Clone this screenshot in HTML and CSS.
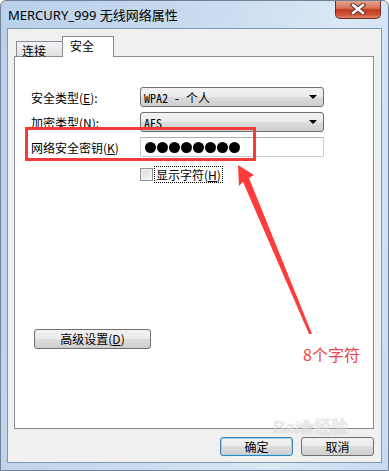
FILE: index.html
```html
<!DOCTYPE html>
<html lang="zh-CN">
<head>
  <meta charset="UTF-8">
  <meta name="viewport" content="width=device-width, initial-scale=1.0">
  <title>MERCURY_999 无线网络属性</title>
  <link rel="stylesheet" href="styles.css">
</head>
<body>
  <div class="window">
    <div class="titlebar">
      <span class="title">MERCURY_999 无线网络属性</span>
      <div class="close-btn">
        <svg width="16" height="12" viewBox="0 0 16 12">
          <path d="M3 2 L13 10 M13 2 L3 10" stroke="#5a3a36" stroke-width="4.5" stroke-linecap="square"/>
          <path d="M3 2 L13 10 M13 2 L3 10" stroke="#ffffff" stroke-width="2.4" stroke-linecap="square"/>
        </svg>
      </div>
    </div>

    <div class="client">
      <div class="tabs">
        <div class="tab">连接</div>
        <div class="tab active">安全</div>
      </div>

      <div class="panel">
        <div class="form">
          <label class="label">安全类型(<u>E</u>):</label>
          <div class="combo">
            <span>WPA2 - 个人</span>
            <span class="caret"></span>
          </div>

          <label class="label">加密类型(<u>N</u>):</label>
          <div class="combo">
            <span>AES</span>
            <span class="caret"></span>
          </div>

          <label class="label">网络安全密钥(<u>K</u>)</label>
          <div class="textbox">
            <span class="dot"></span><span class="dot"></span><span class="dot"></span><span class="dot"></span>
            <span class="dot"></span><span class="dot"></span><span class="dot"></span><span class="dot"></span>
          </div>

          <span></span>
          <div class="check-row">
            <span class="checkbox"></span>
            <span class="check-label">显示字符(<u>H</u>)</span>
          </div>
        </div>

        <button class="btn advanced">高级设置(<u>D</u>)</button>
      </div>

      <div class="footer">
        <button class="btn default">确定</button>
        <button class="btn">取消</button>
      </div>
    </div>

    <!-- annotations drawn over the dialog -->
    <div class="highlight-box"></div>
    <svg class="arrow" width="389" height="471" viewBox="0 0 389 471">
      <polygon points="238,165 254,175 249,178 312,334 309,334 243,182 239,186" fill="#ff3b3b"/>
    </svg>
    <div class="note">8个字符</div>
    <div class="watermark">Bai<span class="paw">&#10047;</span>经验</div>
  </div>
</body>
</html>
```

FILE: styles.css
```css
body {
  margin: 0;
  font-family: "Noto Sans CJK SC", sans-serif;
  font-size: 12px;
  color: #000;
  background: #fff;
}

.window {
  position: relative;
  width: 389px;
  height: 471px;
  box-sizing: border-box;
  display: flex;
  flex-direction: column;
  background: linear-gradient(100deg, #b9d1ea 0%, #c9dcf0 45%, #dbe8f5 75%, #c6dbf1 100%);
  border: 1px solid #6f8296;
  border-radius: 6px 6px 0 0;
  overflow: hidden;
}

.titlebar {
  height: 27px;
  display: flex;
  justify-content: space-between;
  align-items: flex-start;
  padding: 0 7px 0 7px;
}

.title {
  font-family: "Noto Sans", "Noto Sans CJK SC", sans-serif;
  font-size: 13px;
  line-height: 29px;
  color: #000;
}

.close-btn {
  width: 44px;
  height: 18px;
  margin-top: -1px;
  display: flex;
  align-items: center;
  justify-content: center;
  background: linear-gradient(#e9a898 0%, #d8735c 45%, #c3391f 55%, #d2583c 85%, #e08a6c 100%);
  border: 1px solid #6b2f27;
  border-top: none;
  border-radius: 0 0 5px 5px;
}

.client {
  flex: 1;
  margin: 0 6px 7px 6px;
  background: #f0f0f0;
  border: 1px solid #8497ab;
  padding: 7px 7px 0 6px;
  display: flex;
  flex-direction: column;
}

.tabs {
  display: flex;
  align-items: flex-end;
  height: 20px;
  padding-left: 2px;
  position: relative;
  z-index: 1;
}

.tab {
  height: 15px;
  width: 47px;
  border: 1px solid #898c95;
  border-bottom: none;
  background: linear-gradient(#f3f3f3, #e2e2e2);
  line-height: 17px;
  padding-left: 5px;
  box-sizing: border-box;
  font-size: 12px;
}

.tab.active {
  height: 21px;
  width: 52px;
  margin-bottom: -1px;
  margin-left: -1px;
  background: #fff;
  line-height: 18px;
  padding-left: 7px;
}

.panel {
  height: 373px;
  box-sizing: border-box;
  background: #fff;
  border: 1px solid #898c95;
  padding: 30px 0 0 16px;
}

.form {
  display: grid;
  grid-template-columns: 109px 184px;
  grid-auto-rows: 20px;
  row-gap: 5px;
  align-items: center;
}

.form .check-row {
  margin-top: 5px;
}

.label {
  font-size: 12px;
}

.combo {
  height: 20px;
  box-sizing: border-box;
  border: 1px solid #707070;
  border-radius: 3px;
  background: linear-gradient(#f3f3f3 0%, #ebebeb 50%, #dcdcdc 50%, #cfcfcf 100%);
  display: flex;
  align-items: center;
  justify-content: space-between;
  padding: 0 5px 0 3px;
  font-family: "Noto Sans Mono CJK SC", "Liberation Mono", "Noto Sans CJK SC", monospace;
  font-size: 12px;
}

.caret {
  width: 0;
  height: 0;
  border-left: 4px solid transparent;
  border-right: 4px solid transparent;
  border-top: 4px solid #000;
  margin-right: 1px;
}

.textbox {
  height: 20px;
  box-sizing: border-box;
  border: 1px solid #c5cbd3;
  border-top-color: #abadb3;
  border-radius: 2px;
  background: #fff;
  display: flex;
  align-items: center;
  gap: 1px;
  padding-left: 4px;
}

.dot {
  width: 11px;
  height: 11px;
  border-radius: 50%;
  background: #000;
}

.check-row {
  display: flex;
  align-items: center;
  gap: 2px;
}

.checkbox {
  width: 13px;
  height: 13px;
  box-sizing: border-box;
  border: 1px solid #8e8f8f;
  background: linear-gradient(135deg, #dcdcdc, #f6f6f6);
  box-shadow: inset 0 0 0 1px #f4f4f4;
}

.check-label {
  outline: 1px dotted #000;
  padding: 0 1px;
  line-height: 15px;
}

.btn {
  height: 19px;
  box-sizing: border-box;
  border: 1px solid #707070;
  border-radius: 3px;
  background: linear-gradient(#f2f2f2 0%, #ebebeb 50%, #dddddd 50%, #cfcfcf 100%);
  font-family: "Noto Sans CJK SC", sans-serif;
  font-size: 12px;
  padding: 0;
  line-height: 16px;
  color: #000;
}

.advanced {
  width: 117px;
  margin: 147px 0 0 3px;
  height: 20px;
}

.footer {
  display: flex;
  justify-content: flex-end;
  gap: 8px;
  margin-top: 8px;
}

.footer .btn {
  width: 73px;
}

.btn.default {
  border-color: #3c7fb1;
  box-shadow: inset 0 0 0 1px #9fd6f3;
}

.highlight-box {
  position: absolute;
  left: 24px;
  top: 126px;
  width: 231px;
  height: 34px;
  box-sizing: border-box;
  border: 3px solid #f33b3b;
}

.arrow {
  position: absolute;
  left: -1px;
  top: -1px;
}

.note {
  position: absolute;
  left: 302px;
  top: 341px;
  font-size: 16px;
  color: #ee4444;
}

.watermark {
  position: absolute;
  left: 272px;
  top: 418px;
  font-family: "Liberation Sans", sans-serif;
  font-size: 17px;
  font-weight: bold;
  line-height: 17px;
  color: rgba(255, 255, 255, 0.5);
  text-shadow: 0 0 1px rgba(120, 120, 120, 0.35);
}

.paw {
  font-size: 15px;
}
```
